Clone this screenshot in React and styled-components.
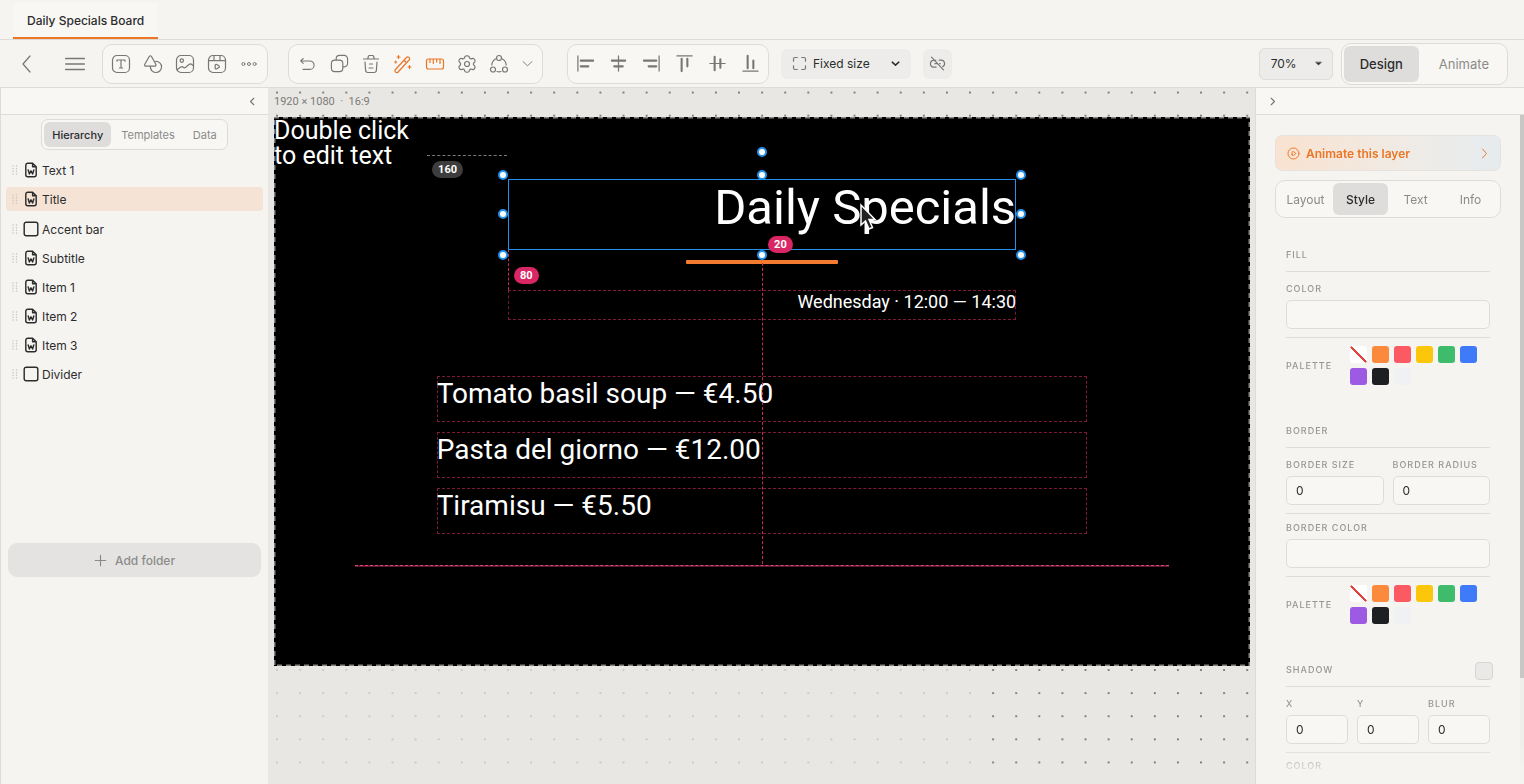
import { useState } from 'react'
import styled, { createGlobalStyle, css } from 'styled-components'

const colors = {
  page: '#f5f4f1',
  raised: '#f8f7f4',
  canvas: '#e8e7e3',
  line: '#dddcd9',
  pressed: '#dedddc',
  text: '#2c2c2c',
  muted: '#8b8b89',
  label: '#979694',
  icon: '#777775',
  accent: '#ea7626',
  selection: '#2490ea',
  guide: '#c92a5c',
}

const GlobalStyle = createGlobalStyle`
  * {
    box-sizing: border-box;
  }

  body {
    margin: 0;
    background: ${colors.page};
    color: ${colors.text};
    font-family: Inter, 'Open Sans', sans-serif;
    font-size: 12px;
  }

  button, input, select {
    font: inherit;
    color: inherit;
    margin: 0;
  }

  button {
    border: 0;
    padding: 0;
    background: none;
    cursor: pointer;
  }
`

const Page = styled.div`
  display: flex;
  flex-direction: column;
  height: 100vh;
  overflow: hidden;
`

const TabStrip = styled.nav`
  flex: none;
  height: 40px;
  padding: 0 13px;
  display: flex;
  align-items: flex-end;
  border-bottom: 1px solid ${colors.line};
`

const DocumentTab = styled.a`
  height: 36px;
  padding: 0 14px;
  display: flex;
  align-items: center;
  background: ${colors.raised};
  border-bottom: 2px solid ${colors.accent};
  color: ${colors.text};
  font-weight: 500;
  text-decoration: none;
`

const Toolbar = styled.header`
  flex: none;
  height: 48px;
  padding: 0 16px 0 11px;
  display: flex;
  align-items: center;
  border-bottom: 1px solid ${colors.line};
`

const IconButton = styled.button`
  width: ${props => props.$width || 32}px;
  height: 32px;
  display: flex;
  align-items: center;
  justify-content: center;
  color: ${props => (props.$active ? colors.accent : colors.icon)};
`

const Navigation = styled.div`
  display: flex;
  gap: 16px;
  margin-right: 11px;
`

const ToolGroup = styled.div`
  display: flex;
  align-items: center;
  height: 40px;
  padding: 0 ${props => props.$pad ?? 2}px;
  margin-right: ${props => props.$after}px;
  background: ${colors.raised};
  border: 1px solid ${colors.line};
  border-radius: 10px;
`

const SelectBox = styled.label`
  position: relative;
  display: flex;
  align-items: center;
  margin-right: ${props => props.$after}px;

  svg {
    position: absolute;
    pointer-events: none;
  }

  svg:first-of-type {
    left: 11px;
    color: ${colors.icon};
  }

  svg:last-of-type {
    left: auto;
    right: 10px;
    color: ${colors.text};
  }
`

const Select = styled.select`
  appearance: none;
  width: ${props => props.$width}px;
  height: ${props => (props.$outlined ? 32 : 30)}px;
  padding: 0 ${props => (props.$outlined ? 11 : 31)}px;
  border: 1px solid ${props => (props.$outlined ? colors.line : 'transparent')};
  border-radius: 6px;
  background: #edecea;
`

const SquareButton = styled(IconButton)`
  width: 29px;
  height: 30px;
  border-radius: 6px;
  background: #edecea;
`

const Spacer = styled.div`
  flex: 1;
`

const segmentGaps = { small: 2, panel: 0, large: 4 }

const Segmented = styled.div`
  display: flex;
  gap: ${props => segmentGaps[props.$size]}px;
  padding: 2px;
  border: 1px solid ${colors.line};
  border-radius: ${props => (props.$size === 'small' ? 7 : 10)}px;
  background: ${colors.raised};
`

const segmentSizes = {
  small: css`
    height: 25px;
    padding: 0 8px;
    font-size: 11px;
  `,
  panel: css`
    flex: 1;
    height: 32px;
    font-size: 12px;
  `,
  large: css`
    height: 36px;
    padding: 0 16px;
    font-size: 13px;
  `,
}

const Segment = styled.button`
  ${props => segmentSizes[props.$size]}
  border-radius: 6px;
  background: ${props => (props['aria-pressed'] ? colors.pressed : 'transparent')};
  color: ${props => (props['aria-pressed'] ? colors.text : colors.muted)};
  font-weight: ${props => (props['aria-pressed'] ? 500 : 400)};
`

const Workspace = styled.main`
  flex: 1;
  min-height: 0;
  display: grid;
  grid-template-columns: 268px minmax(0, 1fr) 269px;
`

const Panel = styled.aside`
  display: flex;
  flex-direction: column;
  min-height: 0;
  background: ${colors.page};
  border-left: 1px solid ${colors.line};
`

const PanelHeader = styled.div`
  flex: none;
  height: 27px;
  display: flex;
  align-items: center;
  justify-content: ${props => (props.$end ? 'flex-end' : 'flex-start')};
  background: ${colors.raised};
  border-bottom: 1px solid ${colors.line};
`

const PanelTabs = styled.div`
  display: flex;
  justify-content: center;
  padding: 4px 0 8px;
`

const LayerList = styled.ul`
  list-style: none;
  margin: 0;
  padding: 0 5px;
  min-height: 385px;
`

const LayerRow = styled.li`
  height: 24px;
  margin-bottom: ${props => (props.$selected ? 6 : 5)}px;
  border-radius: 4px;
  background: ${props => (props.$selected ? '#f5e4d5' : 'transparent')};
`

const LayerButton = styled.button`
  width: 100%;
  height: 24px;
  padding-left: 4px;
  display: flex;
  align-items: center;
  gap: 3px;

  svg:first-child {
    color: #c4c3c0;
  }
`

const AddFolder = styled.button`
  height: 34px;
  margin: 0 7px;
  display: flex;
  align-items: center;
  justify-content: center;
  gap: 8px;
  border-radius: 9px;
  background: #e4e3e1;
  color: ${colors.muted};
  font-weight: 500;
`

const CanvasArea = styled.section`
  position: relative;
  overflow: hidden;
  padding: 0 5px 0 6px;
  background: ${colors.canvas};
`

const DotGrid = styled.svg`
  position: absolute;
  inset: 0;
  width: 100%;
  height: 100%;
`

const CanvasLabel = styled.div`
  position: relative;
  height: 29px;
  padding-top: 6px;
  font-family: Roboto, sans-serif;
  font-size: 11px;
  line-height: 16px;
  color: #7b7b78;
  white-space: pre;
`

const Stage = styled.div`
  position: relative;
  aspect-ratio: 16 / 9;
  background: #000;
  color: #fff;
  font-family: Roboto, sans-serif;
`

const StageEdge = styled.svg`
  position: absolute;
  inset: 0;
  width: 100%;
  height: 100%;
`

// Layers keep their coordinates in the 1920 × 1080 design space
const Placed = styled.div`
  position: absolute;
  left: calc(100% * ${props => props.$x} / 1920);
  top: calc(100% * ${props => props.$y} / 1080);
  width: calc(100% * ${props => props.$w} / 1920);
  height: calc(100% * ${props => props.$h} / 1080);
`

const TextLayer = styled(Placed)`
  font-size: ${props => props.$size}px;
  line-height: ${props => props.$leading}px;
  text-align: ${props => props.$align || 'left'};
  white-space: pre;
  ${props => props.$outlined && `
    outline: 1px dashed ${colors.guide}a0;
    outline-offset: -1px;
  `}
`

const AccentBar = styled(Placed)`
  background: #f47b30;
  border-radius: 1px;
`

const DividerLine = styled(Placed)`
  background: #5c1a30;
  border-top: 1px dashed #e0457a;
`

const Guide = styled(Placed)`
  border-left: ${props => (props.$h ? `1px dashed ${props.$color || colors.guide}` : 0)};
  border-top: ${props => (props.$h ? 0 : `1px dashed ${props.$color || colors.guide}`)};
`

const SelectionFrame = styled(Placed)`
  border: 1px solid ${colors.selection};
`

const Handle = styled.span`
  position: absolute;
  left: ${props => props.$left};
  top: ${props => props.$top};
  width: 10px;
  height: 10px;
  margin: -5px;
  border: 2px solid ${colors.selection};
  border-radius: 50%;
  background: #fff;
`

const Distance = styled.span`
  position: absolute;
  left: calc(100% * ${props => props.$x} / 1920);
  top: calc(100% * ${props => props.$y} / 1080);
  height: 17px;
  padding: 0 6px;
  border-radius: 9px;
  background: ${props => (props.$neutral ? '#3d3d3d' : '#d92664')};
  font-size: 11px;
  font-weight: 700;
  line-height: 17px;
`

const Cursor = styled.svg`
  position: absolute;
  left: calc(100% * 1150 / 1920);
  top: calc(100% * 169 / 1080);
`

const Inspector = styled.div`
  flex: 1;
  min-height: 0;
  overflow: hidden;
  padding: 20px 19px 0;
  border-right: 4px solid transparent;
  border-image: linear-gradient(#c8c7c5 0 84%, #efeeeb 84%) 1;
  mask-image: linear-gradient(#000 0 630px, transparent 664px);
`

const AnimateButton = styled.button`
  width: 100%;
  height: 36px;
  padding: 0 9px 0 11px;
  display: flex;
  align-items: center;
  gap: 6px;
  border: 1px solid #e6e3df;
  border-radius: 7px;
  background: linear-gradient(90deg, #f9e2d0, #efebe6 60%, #e6ebef);
  color: ${colors.accent};
  font-weight: 600;

  span {
    flex: 1;
    text-align: left;
  }
`

const InspectorTabs = styled.div`
  margin: 9px 0 29px;
`

const Section = styled.section`
  padding: 0 11px;
  margin-bottom: 38px;
`

const SectionHead = styled.div`
  height: 25px;
  display: flex;
  justify-content: space-between;
  border-bottom: 1px solid ${colors.line};
`

const SectionTitle = styled.h2`
  margin: 0;
  font-size: 9px;
  font-weight: 500;
  line-height: 16px;
  letter-spacing: 1px;
  color: ${colors.label};
`

const FieldRow = styled.div`
  display: flex;
  gap: 9px;
  padding: ${props => props.$top}px 0 8px;
  border-bottom: 1px solid ${colors.line};
`

const Field = styled.label`
  flex: 1;
  min-width: 0;
  font-size: 9px;
  font-weight: 500;
  line-height: 16px;
  letter-spacing: 1px;
  color: ${colors.label};
`

const Input = styled.input`
  display: block;
  width: 100%;
  height: 29px;
  margin-top: 3px;
  padding: 0 9px;
  border: 1px solid ${colors.line};
  border-radius: 5px;
  background: ${colors.raised};
  color: ${colors.text};
  font-size: 12px;
  font-weight: 400;
`

const PaletteRow = styled.div`
  display: flex;
  align-items: center;
  justify-content: space-between;
  padding-top: 8px;
`

const Swatches = styled.div`
  width: 140px;
  display: flex;
  flex-wrap: wrap;
  gap: 5px;
`

const Swatch = styled.button`
  width: 17px;
  height: 17px;
  border-radius: 3px;
  background: ${props => props.$color};
`

const Toggle = styled.input`
  appearance: none;
  flex: none;
  width: 18px;
  height: 18px;
  margin-right: -3px;
  border: 1px solid #d6d5d2;
  border-radius: 4px;
  background: #eae9e7;
`

const Icon = ({ size = 20, width = 1.2, children }) => (
  <svg
    width={size}
    height={size}
    viewBox="0 0 20 20"
    fill="none"
    stroke="currentColor"
    strokeWidth={width}
    strokeLinecap="round"
    strokeLinejoin="round"
    aria-hidden="true"
  >
    {children}
  </svg>
)

const icons = {
  back: <path d="M13 2 6 10l7 8" />,
  menu: <path d="M.7 4.6h18.600M.7 10h18.600M.7 15.400h18.600" />,
  text: (
    <>
      <rect x="1.500" y="1.500" width="17" height="17" rx="4.500" />
      <path d="M6 7.200V6h8v1.200M10 6v8M8.300 14h3.400" />
    </>
  ),
  shapes: (
    <>
      <path d="M6.200 2.500c.6-1 1.700-1 2.300 0l4.300 7.700c.5 1-.1 2-1.200 2H3c-1.100 0-1.800-1-1.200-2z" />
      <path d="M12.700 7.300a5.600 5.600 0 1 1-5.300 5" />
    </>
  ),
  image: (
    <>
      <rect x="1.500" y="1.500" width="17" height="17" rx="4.500" />
      <circle cx="6.800" cy="6.600" r="1.700" />
      <path d="m2.300 15.500 3.500-2.400c.8-.5 1.700-.5 2.400.1.800.7 1.700.7 2.500.1l3.300-2.800c.8-.7 2-.7 2.800 0l1.600 1.400" />
    </>
  ),
  video: (
    <>
      <rect x="1.500" y="1.500" width="17" height="17" rx="4.500" />
      <path d="M1.800 6.700h16.400M7 1.700v4.800M13 1.700v4.800M8.200 12.700v-1.200c0-1 .8-1.400 1.600-.9l2 1.200c.8.500.8 1.300 0 1.800l-2 1.200c-.8.500-1.600 0-1.600-.9z" />
    </>
  ),
  more: (
    <>
      <circle cx="3" cy="10" r="1.900" />
      <circle cx="10" cy="10" r="1.900" />
      <circle cx="17" cy="10" r="1.900" />
    </>
  ),
  undo: <path d="M5.500 16h7.700a4.700 4.700 0 0 0 0-9.400H3M5.800 9.400 3 6.600l2.800-2.700" />,
  copy: (
    <>
      <rect x="1.500" y="6.500" width="12" height="12" rx="3.500" />
      <path d="M6.500 6.300V5A3.500 3.500 0 0 1 10 1.500h5A3.500 3.500 0 0 1 18.500 5v5a3.500 3.500 0 0 1-3.500 3.500h-1.300" />
    </>
  ),
  trash: <path d="M2.500 5h15M6.800 4.800l.5-2.300c.2-.7.500-1 1.200-1h3c.7 0 1 .3 1.200 1l.5 2.300M4 8l.6 8.300c.1 1.500.7 2.200 2.300 2.200h6.200c1.600 0 2.200-.7 2.300-2.200L16 8M8.500 10h3M8 14h4" />,
  wand: <path d="m2.500 15.500 11-12c1.700-1.700 4.300.7 2.600 2.500l-11 12c-1.700 1.700-4.300-.7-2.600-2.500zM11 6.300l2.600 2.500M5.500 1.500v3M4 3h3M2.700 7v2M1.700 8h2M16.500 11.500v3M15 13h3" />,
  ruler: <path d="M3.500 5h13c1.300 0 2 .7 2 2v6c0 1.300-.7 2-2 2h-13c-1.300 0-2-.7-2-2V7c0-1.300.7-2 2-2zM5 5v3.500M8.300 5v4.500M11.600 5v3M15 5v4.500" />,
  settings: (
    <>
      <circle cx="10" cy="10" r="2.500" />
      <path d="M8 2.500c.5-1 3.500-1 4 0l.6 1.600c.3.600 1 .9 1.600.7l1.700-.5c1.100-.2 2.700 2.400 2 3.300l-1.200 1.400c-.4.500-.4 1.400 0 1.900l1.200 1.400c.7.900-.9 3.500-2 3.300l-1.700-.4c-.6-.2-1.300.1-1.600.7l-.6 1.600c-.5 1-3.500 1-4 0l-.6-1.600c-.3-.6-1-.9-1.600-.7l-1.700.4c-1.100.2-2.700-2.400-2-3.300L3.300 11c.4-.5.4-1.400 0-1.900L2.100 7.600c-.7-.9.9-3.500 2-3.300l1.700.5c.6.200 1.300-.1 1.600-.7z" />
    </>
  ),
  nodes: (
    <>
      <circle cx="10" cy="4" r="2.500" />
      <circle cx="4" cy="15.500" r="2.500" />
      <circle cx="16" cy="15.500" r="2.500" />
      <path d="M6.500 5a7.500 7.500 0 0 0-3.700 6M13.500 5a7.500 7.500 0 0 1 3.700 6M8 17.500c1.300.4 2.700.4 4 0" />
    </>
  ),
  chevronDown: <path d="m4 7.500 6 5.500 6-5.500" />,
  chevronLeft: <path d="m12 5-5 5 5 5" />,
  chevronRight: <path d="m8 5 5 5-5 5" />,
  arrowRight: <path d="m7 3 6 7-6 7" />,
  alignLeft: (
    <>
      <path d="M2 2v16" strokeWidth="1.300" />
      <path d="M5 7h13M5 13h8" />
    </>
  ),
  alignCenter: (
    <>
      <path d="M10 2v16" strokeWidth="1.300" />
      <path d="M3 7h14M5.500 13h9" />
    </>
  ),
  alignRight: (
    <>
      <path d="M18 2v16" strokeWidth="1.300" />
      <path d="M2 7h13M7 13h8" />
    </>
  ),
  alignTop: (
    <>
      <path d="M2 2h16" strokeWidth="1.300" />
      <path d="M7 5v13M13 5v8" />
    </>
  ),
  alignMiddle: (
    <>
      <path d="M2 10h16" strokeWidth="1.300" />
      <path d="M7 3v14M13 5.500v9" />
    </>
  ),
  alignBottom: (
    <>
      <path d="M2 18h16" strokeWidth="1.300" />
      <path d="M7 2v13M13 7v8" />
    </>
  ),
  frame: <path d="M2 7V4q0-2 2-2h3M13 2h3q2 0 2 2v3M18 13v3q0 2-2 2h-3M7 18H4q-2 0-2-2v-3" />,
  unlink: <path d="m3 2.500 14 15M8 6.300H6a4 4 0 0 0-.5 8h2.800M12 6h2.200a4.100 4.100 0 0 1 2 7.700M7 10.200h2.500M12.500 10.200h.7" />,
  caret: <path d="m4 7.500 6 6 6-6z" fill="currentColor" />,
  grip: <path d="M6 2v.1M13 2v.1M6 7.300v.1M13 7.300v.1M6 12.600v.1M13 12.600v.1M6 18v.1M13 18v.1" />,
  file: <path d="M12 1.500H6a2.500 2.500 0 0 0-2.500 2.500v12A2.500 2.500 0 0 0 6 18.500h8a2.500 2.500 0 0 0 2.500-2.500V6zM12 1.500V6h4.500M6.500 10l1.500 5 2-4 2 4 1.500-5" />,
  box: <rect x="1.500" y="1.500" width="17" height="17" rx="2.500" />,
  plus: <path d="M10 2v16M2 10h16" />,
  play: (
    <>
      <circle cx="10" cy="10" r="8.500" />
      <path d="M7.800 11.500v-3c0-1.500 1-2 2.200-1.300l2.500 1.500c1.200.7 1.200 1.900 0 2.600L10 12.800c-1.200.7-2.200.2-2.200-1.300z" />
    </>
  ),
}

const layers = [
  { name: 'Text 1', icon: 'file' },
  { name: 'Title', icon: 'file' },
  { name: 'Accent bar', icon: 'box' },
  { name: 'Subtitle', icon: 'file' },
  { name: 'Item 1', icon: 'file' },
  { name: 'Item 2', icon: 'file' },
  { name: 'Item 3', icon: 'file' },
  { name: 'Divider', icon: 'box' },
]

const menuItems = [
  { text: 'Tomato basil soup — €4.50', y: 510 },
  { text: 'Pasta del giorno — €12.00', y: 620 },
  { text: 'Tiramisu — €5.50', y: 730 },
]

const far = 'calc(100% + 6px)'
const handles = [
  ['-6px', '-5px'], ['50%', '-5px'], [far, '-5px'],
  ['-6px', '50%'], [far, '50%'],
  ['-6px', far], ['50%', far], [far, far],
  ['50%', '-28px'],
]

const palette = [
  ['None', 'linear-gradient(45deg, #fff 46%, #e0433c 46% 54%, #fff 54%)'],
  ['Orange', '#fb8a3c'],
  ['Red', '#fb5a62'],
  ['Yellow', '#fcc60b'],
  ['Green', '#3fbb6c'],
  ['Blue', '#3f7af8'],
  ['Purple', '#9c5be2'],
  ['Black', '#1d1f22'],
  ['White', '#f0f1f2'],
]

function Tool({ name, label, size, width, ...rest }) {
  return (
    <IconButton type="button" aria-label={label} {...rest}>
      <Icon size={size} width={width}>{icons[name]}</Icon>
    </IconButton>
  )
}

function Segments({ options, initial, size }) {
  const [current, setCurrent] = useState(initial)
  return (
    <Segmented $size={size}>
      {options.map(option => (
        <Segment
          key={option}
          type="button"
          $size={size}
          aria-pressed={option === current}
          onClick={() => setCurrent(option)}
        >
          {option}
        </Segment>
      ))}
    </Segmented>
  )
}

function Palette() {
  return (
    <PaletteRow>
      <SectionTitle as="span">PALETTE</SectionTitle>
      <Swatches>
        {palette.map(([name, color]) => (
          <Swatch key={name} type="button" aria-label={name} $color={color} />
        ))}
      </Swatches>
    </PaletteRow>
  )
}

function TopBar() {
  return (
    <Toolbar>
      <Navigation>
        <Tool name="back" label="Back" />
        <Tool name="menu" label="Menu" width={1.5} />
      </Navigation>
      <ToolGroup $after={20}>
        <Tool name="text" label="Text" />
        <Tool name="shapes" label="Shapes" />
        <Tool name="image" label="Image" />
        <Tool name="video" label="Video" />
        <Tool name="more" label="More" size={16} />
      </ToolGroup>
      <ToolGroup $after={24}>
        <Tool name="undo" label="Undo" size={18} />
        <Tool name="copy" label="Duplicate" size={19} />
        <Tool name="trash" label="Delete" />
        <Tool name="wand" label="Smart guides" $active />
        <Tool name="ruler" label="Rulers" $active />
        <Tool name="settings" label="Settings" />
        <Tool name="nodes" label="Connections" />
        <Tool name="chevronDown" label="More actions" size={15} $width={25} />
      </ToolGroup>
      <ToolGroup $pad={1} $after={12}>
        <Tool name="alignLeft" label="Align left" size={19} width={2.2} $width={33} />
        <Tool name="alignCenter" label="Align center" size={19} width={2.2} $width={33} />
        <Tool name="alignRight" label="Align right" size={19} width={2.2} $width={33} />
        <Tool name="alignTop" label="Align top" size={19} width={2.2} $width={33} />
        <Tool name="alignMiddle" label="Align middle" size={19} width={2.2} $width={33} />
        <Tool name="alignBottom" label="Align bottom" size={19} width={2.2} $width={33} />
      </ToolGroup>
      <SelectBox $after={12}>
        <Icon size={15} width={1.6}>{icons.frame}</Icon>
        <Select $width={130} aria-label="Canvas sizing">
          <option>Fixed size</option>
        </Select>
        <Icon size={11} width={2.6}>{icons.chevronDown}</Icon>
      </SelectBox>
      <SquareButton type="button" aria-label="Unlink">
        <Icon size={17} width={1.4}>{icons.unlink}</Icon>
      </SquareButton>
      <Spacer />
      <SelectBox $after={8}>
        <Select $width={74} $outlined aria-label="Zoom">
          <option>70%</option>
        </Select>
        <Icon size={9}>{icons.caret}</Icon>
      </SelectBox>
      <Segments options={['Design', 'Animate']} initial="Design" size="large" />
    </Toolbar>
  )
}

function LayersPanel() {
  const [selected, setSelected] = useState('Title')
  return (
    <Panel>
      <PanelHeader $end>
        <Tool name="chevronLeft" label="Collapse layers" size={13} width={1.8} />
      </PanelHeader>
      <PanelTabs>
        <Segments options={['Hierarchy', 'Templates', 'Data']} initial="Hierarchy" size="small" />
      </PanelTabs>
      <LayerList>
        {layers.map(layer => (
          <LayerRow key={layer.name} $selected={layer.name === selected}>
            <LayerButton type="button" onClick={() => setSelected(layer.name)}>
              <Icon size={10} width={3}>{icons.grip}</Icon>
              <Icon size={16} width={1.8}>{icons[layer.icon]}</Icon>
              {layer.name}
            </LayerButton>
          </LayerRow>
        ))}
      </LayerList>
      <AddFolder type="button">
        <Icon size={13} width={1.8}>{icons.plus}</Icon>
        Add folder
      </AddFolder>
    </Panel>
  )
}

function Canvas() {
  return (
    <CanvasArea>
      <DotGrid aria-hidden="true">
        <defs>
          <pattern id="dots" width="23.1" height="23.1" patternUnits="userSpaceOnUse" x="-2.500" y="-7">
            <circle cx="11.500" cy="11.500" r="1" fill="#5f5f5c" />
          </pattern>
        </defs>
        <rect width="100%" height="100%" fill="url(#dots)" />
        <rect y="570" width="715" height="100%" fill={colors.canvas} opacity="0.72" />
      </DotGrid>
      <CanvasLabel>{'1920 × 1080  ·  16:9'}</CanvasLabel>
      <Stage>
        <TextLayer $x={0} $y={2} $w={300} $h={100} $size={25} $leading={25}>
          {'Double click\nto edit text'}
        </TextLayer>
        <TextLayer $x={460} $y={120} $w={1000} $h={140} $size={49} $leading={60} $align="right">
          Daily Specials
        </TextLayer>
        <TextLayer $x={460} $y={340} $w={1000} $h={60} $size={18} $leading={24} $align="right" $outlined>
          Wednesday · 12:00 — 14:30
        </TextLayer>
        {menuItems.map(item => (
          <TextLayer key={item.text} $x={320} $y={item.y} $w={1280} $h={90} $size={28} $leading={36} $outlined>
            {item.text}
          </TextLayer>
        ))}
        <AccentBar $x={810} $y={281} $w={300} $h={8} />
        <DividerLine $x={160} $y={881} $w={1600} $h={4} />
        <Guide $x={960} $y={288} $w={0} $h={592} />
        <Guide $x={460} $y={260} $w={0} $h={80} />
        <Guide $x={300} $y={75} $w={158} $h={0} $color="#7a7a7a" />
        <SelectionFrame $x={460} $y={121} $w={1000} $h={140}>
          {handles.map(([left, top]) => (
            <Handle key={left + top} $left={left} $top={top} />
          ))}
        </SelectionFrame>
        <Distance $x={311} $y={87} $neutral>160</Distance>
        <Distance $x={972} $y={235}>20</Distance>
        <Distance $x={472} $y={296}>80</Distance>
        <Cursor width="18" height="30" viewBox="0 0 18 30" aria-hidden="true">
          <path d="M2 2v20l4.500-4 3.500 8 3.500-1.500-3.500-8h6z" fill="#222" stroke="#fff" strokeWidth="1.500" />
        </Cursor>
        <StageEdge aria-hidden="true">
          <rect width="100%" height="100%" fill="none" stroke="#858581" strokeWidth="3" strokeDasharray="5 4" />
        </StageEdge>
      </Stage>
    </CanvasArea>
  )
}

function InspectorPanel() {
  return (
    <Panel>
      <PanelHeader>
        <Tool name="chevronRight" label="Collapse inspector" size={13} width={1.8} />
      </PanelHeader>
      <Inspector>
        <AnimateButton type="button">
          <Icon size={13} width={1.5}>{icons.play}</Icon>
          <span>Animate this layer</span>
          <Icon size={13} width={1.5}>{icons.arrowRight}</Icon>
        </AnimateButton>
        <InspectorTabs>
          <Segments options={['Layout', 'Style', 'Text', 'Info']} initial="Style" size="panel" />
        </InspectorTabs>
        <Section>
          <SectionHead>
            <SectionTitle>FILL</SectionTitle>
          </SectionHead>
          <FieldRow $top={9}>
            <Field>COLOR<Input type="text" /></Field>
          </FieldRow>
          <Palette />
        </Section>
        <Section>
          <SectionHead>
            <SectionTitle>BORDER</SectionTitle>
          </SectionHead>
          <FieldRow $top={9}>
            <Field>BORDER SIZE<Input type="text" defaultValue="0" /></Field>
            <Field>BORDER RADIUS<Input type="text" defaultValue="0" /></Field>
          </FieldRow>
          <FieldRow $top={6}>
            <Field>BORDER COLOR<Input type="text" /></Field>
          </FieldRow>
          <Palette />
        </Section>
        <Section>
          <SectionHead>
            <SectionTitle>SHADOW</SectionTitle>
            <Toggle type="checkbox" aria-label="Shadow" />
          </SectionHead>
          <FieldRow $top={9}>
            <Field>X<Input type="text" defaultValue="0" /></Field>
            <Field>Y<Input type="text" defaultValue="0" /></Field>
            <Field>BLUR<Input type="text" defaultValue="0" /></Field>
          </FieldRow>
          <FieldRow $top={5}>
            <Field>COLOR<Input type="text" /></Field>
          </FieldRow>
        </Section>
      </Inspector>
    </Panel>
  )
}

export default function App() {
  return (
    <>
      <GlobalStyle />
      <Page>
        <TabStrip>
          <DocumentTab href="#board">Daily Specials Board</DocumentTab>
        </TabStrip>
        <TopBar />
        <Workspace>
          <LayersPanel />
          <Canvas />
          <InspectorPanel />
        </Workspace>
      </Page>
    </>
  )
}
